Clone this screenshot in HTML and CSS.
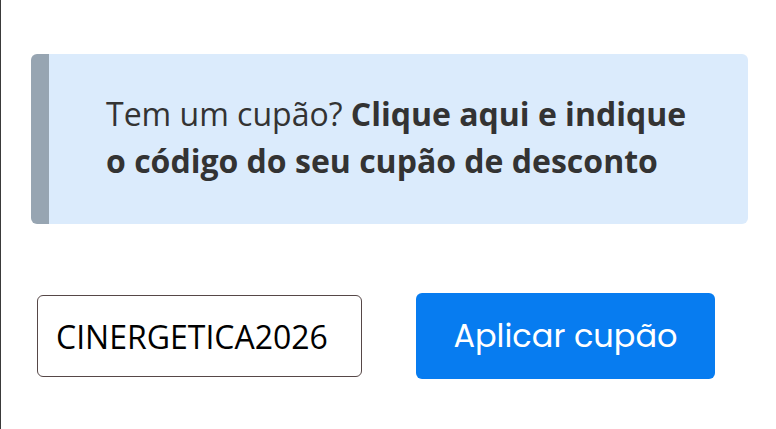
FILE: index.html
```html
<!DOCTYPE html>
<html lang="pt">
<head>
<meta charset="utf-8">
<title>Cupão</title>
<link rel="stylesheet" href="styles.css">
</head>
<body>
<div class="page">
  <div class="notice">
    <p class="notice-text">Tem um cupão? <strong>Clique aqui e indique o código do seu cupão de desconto</strong></p>
  </div>
  <form class="coupon-form">
    <input class="coupon-input" type="text" value="CINERGETICA2026" aria-label="Código do cupão">
    <button class="coupon-button" type="button">Aplicar cupão</button>
  </form>
</div>
</body>
</html>
```
FILE: styles.css
```css
* { box-sizing: border-box; }
html, body { margin: 0; padding: 0; background: #fff; }
.page {
  height: 429px;
  border-left: 1px solid #3a3a3a;
  padding-top: 54px;
  font-family: "Open Sans", "Noto Sans", sans-serif;
  overflow: hidden;
}
.notice {
  margin-left: 30px;
  width: 717px;
  height: 170px;
  background: #dbebfc;
  border-left: 18px solid #97a5b2;
  border-radius: 6px;
  padding: 37px 57px 0 57px;
}
.notice-text {
  margin: 0;
  font-size: 32px;
  line-height: 46.5px;
  color: #333333;
}
.notice-text strong { font-weight: 700; }
.coupon-form {
  display: flex;
  align-items: center;
  gap: 54px;
  margin-top: 69px;
  margin-left: 36px;
}
.coupon-input {
  width: 325px;
  height: 82px;
  border: 1.5px solid #564747;
  border-radius: 6px;
  padding: 0 0 0 18px;
  font-family: "Open Sans", "Noto Sans", sans-serif;
  font-size: 32px;
  color: #000;
  background: #fff;
  outline: none;
}
.coupon-button {
  width: 299px;
  height: 86px;
  border: none;
  border-radius: 6px;
  background: #077cf0;
  color: #fff;
  font-family: "Poppins", "Lato", "Noto Sans", sans-serif;
  font-size: 32px;
  font-weight: 400;
  padding: 0;
  cursor: pointer;
}
```
